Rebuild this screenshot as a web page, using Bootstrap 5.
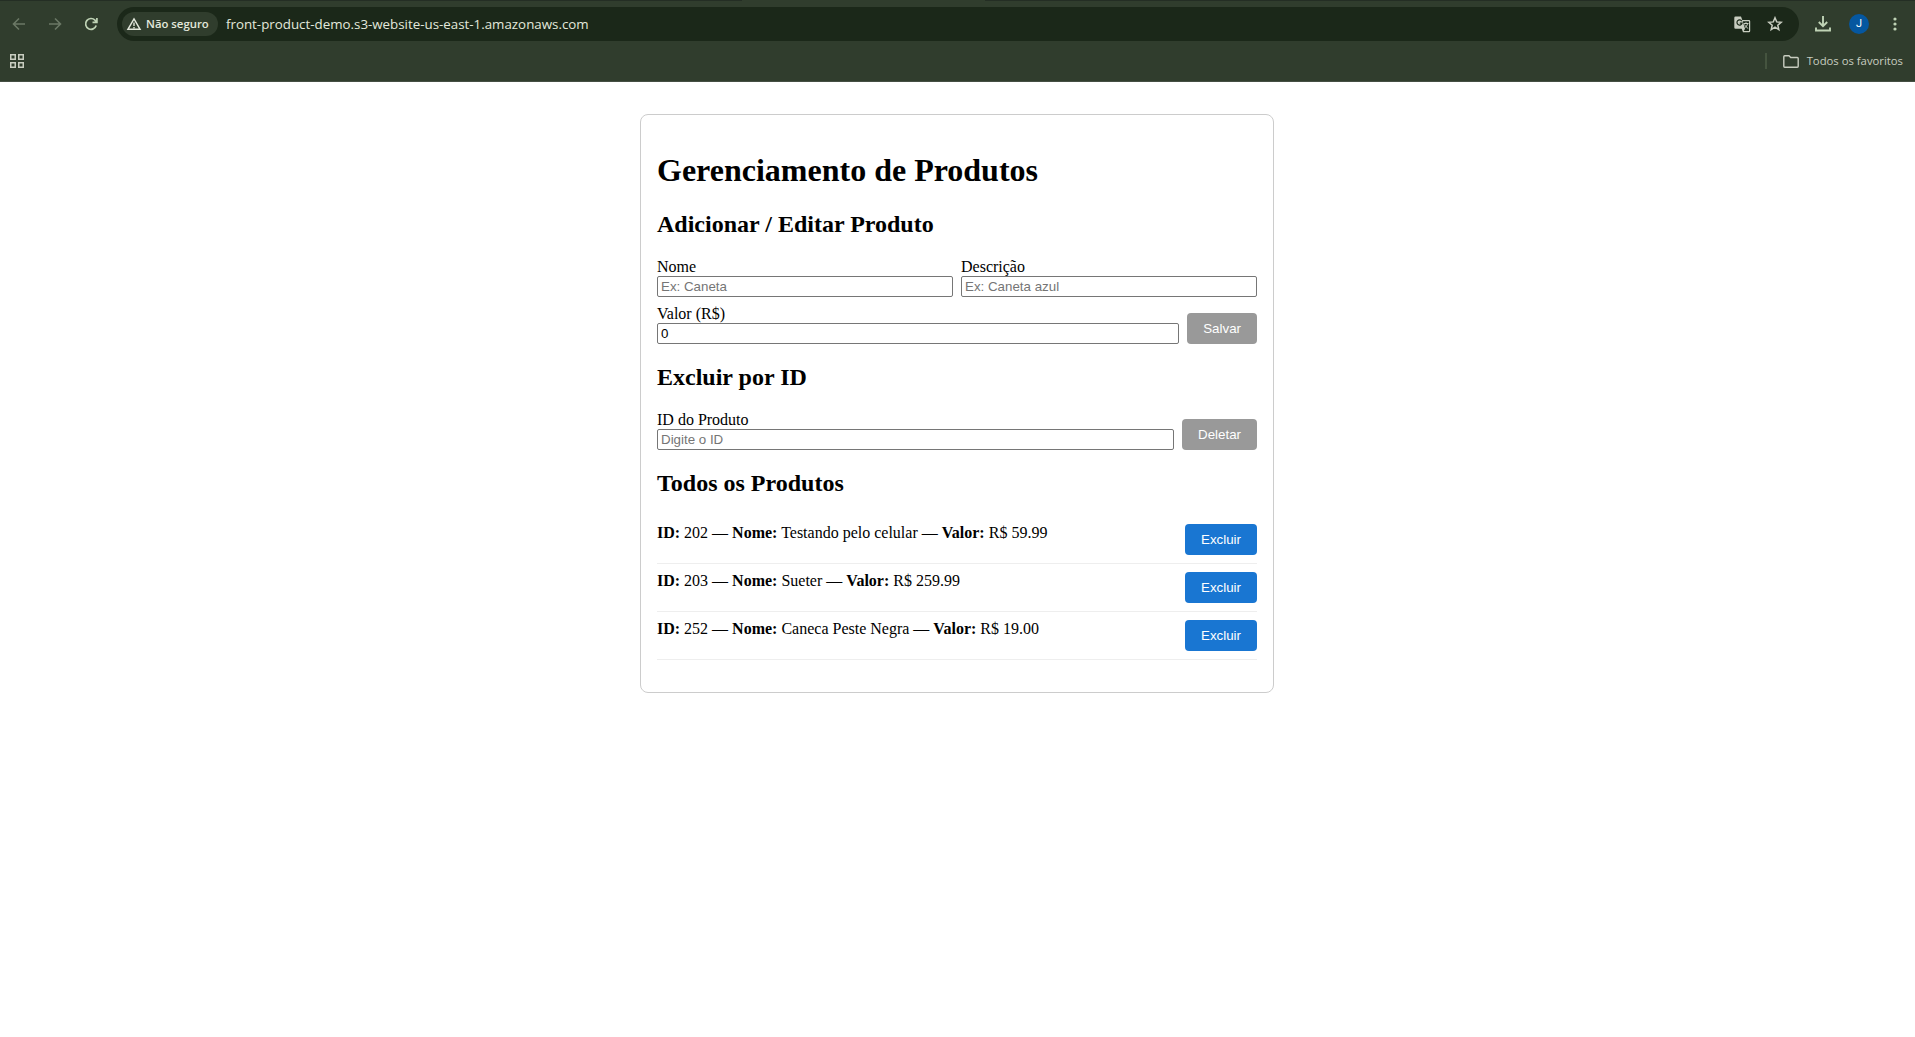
<!DOCTYPE html>
<html lang="pt-BR">
<head>
<meta charset="utf-8">
<title>Gerenciamento de Produtos</title>
<link href="https://cdn.jsdelivr.net/npm/bootstrap@5.3.0/dist/css/bootstrap.min.css" rel="stylesheet">
<style>
body{background:#fff;color:#000;font:16px/18px "Liberation Serif","Times New Roman",serif;overflow:hidden}
.chrome{height:82px;background:#303d2d;border-bottom:1px solid #454f43;font-family:"Open Sans","Noto Sans",sans-serif;color:#e3e8dc}
.tab-edge{height:1px;background:linear-gradient(90deg,#242e24 742px,#303d2d 742px 985px,#242e24 985px)}
.toolbar{height:46px;padding:0 18px 0 12px}
.chrome svg{display:block;flex:none}
.nav-ico{margin-right:22px}
.omnibox{height:34px;border-radius:17px;background:#1b2819;margin:0 16px 0 19px;padding:0 16px 0 5px}
.chip{width:96px;height:24px;border-radius:12px;background:#303d2d;padding-left:4px;font-size:11.35px;font-weight:600;white-space:nowrap}
.addr{font-size:13.33px;margin-left:8px;white-space:nowrap}
.avatar{width:20px;height:20px;border-radius:50%;background:#0557a0;color:#fff;font:11px/20px Roboto,"Liberation Sans",sans-serif;margin:0 24px 0 18px}
.bookmarks{height:34px;padding:0 12px 6px 10px;font-size:11.3px;color:#c8cdc0}
.sep{width:2px;height:16px;background:#45543f;margin-right:16px}
.sheet{padding:32px 1px 0 0}
.panel{width:634px;margin:0 auto;border:1px solid #ccc;border-radius:8px;padding:16px}
.panel h1{font-size:32px;line-height:37px;font-weight:700;margin:21.44px 0}
.panel h2{font-size:24px;line-height:27px;font-weight:700;margin:19.92px 0}
.field{height:21px;border:1px solid #767676;border-radius:2px;padding:1px 3px;font:13.333px/15px "Liberation Sans",Arial,sans-serif;color:#000;background:#fff;width:100%;display:block}
.field::placeholder{color:#757575;opacity:1}
.act{--bs-btn-padding-x:16px;--bs-btn-padding-y:8px;--bs-btn-border-width:0;--bs-btn-border-radius:4px;font:13.333px/15px "Liberation Sans",Arial,sans-serif;color:#fff;background:#1976d2;height:31px}
.act:disabled{background:#999;color:#fff;opacity:1}
.item{padding:8px 0;border-bottom:1px solid #eee}
.item strong{font-weight:700}
</style>
</head>
<body>
<header class="chrome">
  <div class="tab-edge"></div>
  <div class="toolbar d-flex align-items-center">
    <svg class="nav-ico" width="14" height="14" viewBox="0 0 14 14" fill="none" stroke="#6b7865" stroke-width="1.6"><path d="M13 7H2M7 1.5 1.5 7 7 12.5"/></svg>
    <svg class="nav-ico" width="14" height="14" viewBox="0 0 14 14" fill="none" stroke="#6b7865" stroke-width="1.6"><path d="M1 7H12M7 1.5 12.5 7 7 12.5"/></svg>
    <svg width="14" height="14" viewBox="0 0 14 14" fill="none" stroke="#bfd3b5" stroke-width="1.7"><path d="M12.2 8.5A5.4 5.4 0 1 1 11 3.2L12.5 5M12.9 1V5.3H8.5"/></svg>
    <div class="omnibox d-flex align-items-center flex-grow-1">
      <div class="chip d-flex align-items-center"><svg class="me-1" width="16" height="14" viewBox="0 0 16 14" fill="none" stroke="#e3e8dc" stroke-width="1.4"><path d="M8 1.8 14.1 12.3H1.9ZM8 5.5V9M8 9.9V11.2"/></svg><span>Não seguro</span></div>
      <span class="addr">front-product-demo.s3-website-us-east-1.amazonaws.com</span>
      <svg class="ms-auto me-3" width="17" height="17" viewBox="0 0 17 17"><path d="M1.5.5H7l1.3 3.5H15A1.2 1.2 0 0 1 16.2 5.2V15A1.2 1.2 0 0 1 15 16.2H9L7.7 12.7H1.5A1.2 1.2 0 0 1 .3 11.5V1.7A1.2 1.2 0 0 1 1.5.5Z" fill="#c8cdc0"/><path d="M8.7 5.2H15V15H9.8L11 12.7Z" fill="#1b2819"/><path d="M7.8 5.1A2.6 2.6 0 1 0 8.1 7.1H5.8" fill="none" stroke="#1b2819" stroke-width="1.2"/><path d="M9.7 7.5H14.5M12 6.3V7.5M13.6 7.5C13.2 9.5 12 11 10.7 12M10.5 8.5C11.2 10 12.7 11.5 14.2 12.5" fill="none" stroke="#c8cdc0"/></svg>
      <svg width="16" height="16" viewBox="0 0 16 16" fill="none" stroke="#c8cdc0" stroke-width="1.5"><path d="M8 1.8 9.7 5.9 14.2 6.3 10.8 9.2 11.8 13.6 8 11.2 4.200 13.6 5.2 9.2 1.8 6.3 6.3 5.9Z"/></svg>
    </div>
    <svg width="16" height="16" viewBox="0 0 16 16" fill="none" stroke="#bfd3b5" stroke-width="1.9"><path d="M8 0V9.8M3.8 6 8 10.2 12.2 6M1 11.500V14.500H15V11.500"/></svg>
    <div class="avatar d-flex align-items-center justify-content-center">J</div>
    <svg width="4" height="14" viewBox="0 0 4 14" fill="#bfd3b5"><circle cx="2" cy="2" r="1.6"/><circle cx="2" cy="7" r="1.6"/><circle cx="2" cy="12" r="1.6"/></svg>
  </div>
  <div class="bookmarks d-flex align-items-center">
    <svg class="me-auto" width="14" height="14" viewBox="0 0 14 14" fill="none" stroke="#c8cdc0" stroke-width="1.5"><path d="M.75.75h4.500v4.500H.75ZM8.750.75h4.500v4.500h-4.500ZM.75 8.750h4.500v4.500H.75ZM8.750 8.750h4.500v4.500h-4.500Z"/></svg>
    <div class="sep"></div>
    <svg class="me-2" width="16" height="13" viewBox="0 0 16 13" fill="none" stroke="#c8cdc0" stroke-width="1.4"><path d="M1.7.8H6L7.7 2.500H14.300Q15.200 2.500 15.200 3.400V11.300Q15.200 12.200 14.300 12.200H1.700Q.8 12.200.8 11.300V1.700Q.8.8 1.700.8Z"/></svg>
    <span>Todos os favoritos</span>
  </div>
</header>
<div class="sheet">
<main class="panel">
  <h1>Gerenciamento de Produtos</h1>
  <h2>Adicionar / Editar Produto</h2>
  <div class="d-flex gap-2 mb-2">
    <label class="flex-fill">Nome<input class="field" placeholder="Ex: Caneta"></label>
    <label class="flex-fill">Descrição<input class="field" placeholder="Ex: Caneta azul"></label>
  </div>
  <div class="d-flex gap-2 align-items-end">
    <label class="flex-fill">Valor (R$)<input class="field" value="0"></label>
    <button class="btn act" disabled>Salvar</button>
  </div>
  <h2>Excluir por ID</h2>
  <div class="d-flex gap-2 align-items-end">
    <label class="flex-fill">ID do Produto<input class="field" placeholder="Digite o ID"></label>
    <button class="btn act" disabled>Deletar</button>
  </div>
  <h2>Todos os Produtos</h2>
  <ul class="list-unstyled mb-3">
    <li class="item d-flex justify-content-between"><span><strong>ID:</strong> 202 — <strong>Nome:</strong> Testando pelo celular — <strong>Valor:</strong> R$ 59.99</span><button class="btn act">Excluir</button></li>
    <li class="item d-flex justify-content-between"><span><strong>ID:</strong> 203 — <strong>Nome:</strong> Sueter — <strong>Valor:</strong> R$ 259.99</span><button class="btn act">Excluir</button></li>
    <li class="item d-flex justify-content-between"><span><strong>ID:</strong> 252 — <strong>Nome:</strong> Caneca Peste Negra — <strong>Valor:</strong> R$ 19.00</span><button class="btn act">Excluir</button></li>
  </ul>
</main>
</div>
<script src="https://cdn.jsdelivr.net/npm/bootstrap@5.3.0/dist/js/bootstrap.bundle.min.js"></script>
</body>
</html>
